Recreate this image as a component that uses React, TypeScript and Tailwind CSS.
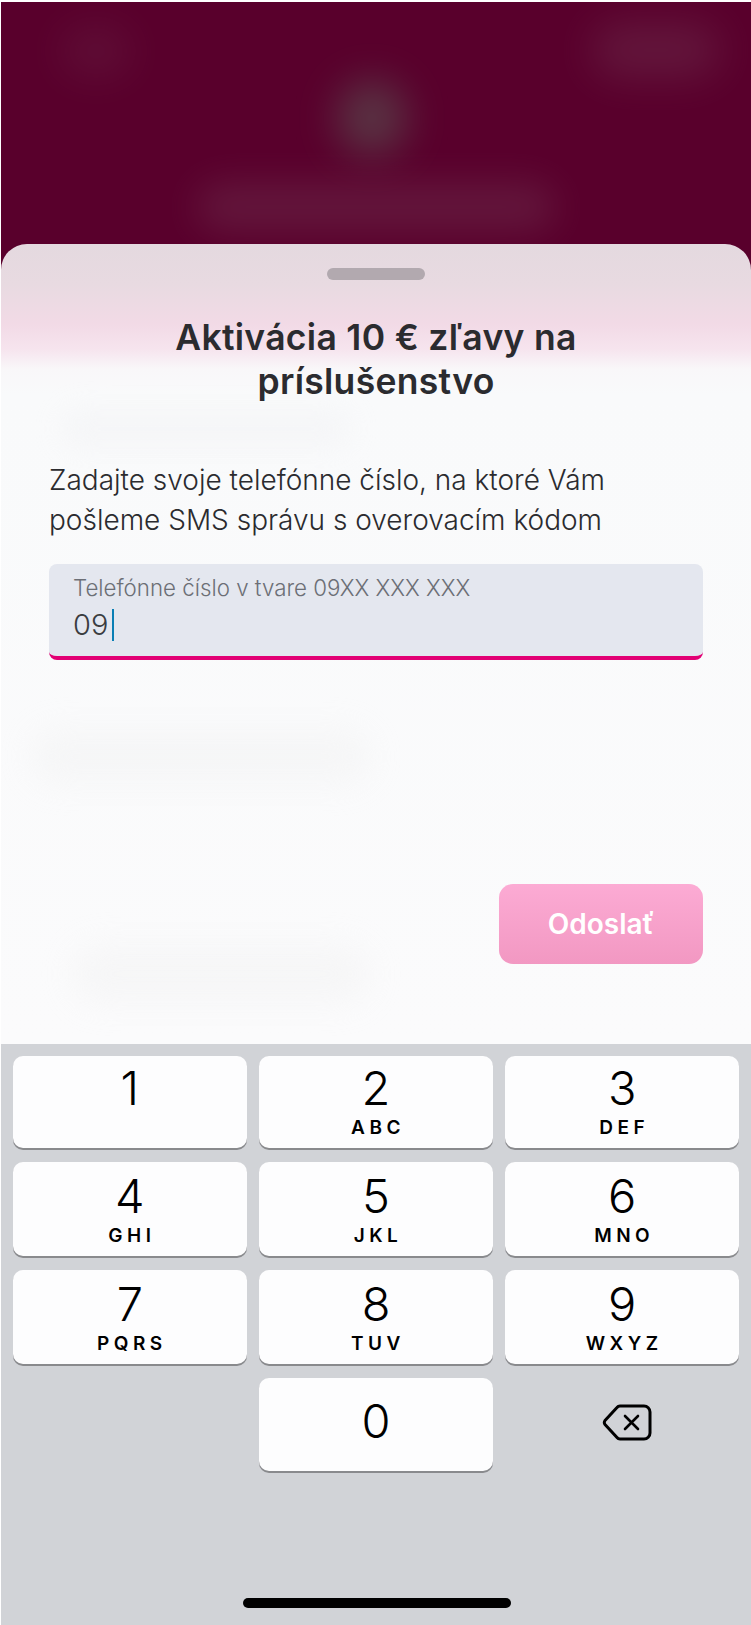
const KEYS = [
  { d: '1', l: '', pad: 'pt-[6px]' },
  { d: '2', l: 'ABC', pad: 'pt-[6px]' },
  { d: '3', l: 'DEF', pad: 'pt-[6px]' },
  { d: '4', l: 'GHI', pad: 'pt-[8px]' },
  { d: '5', l: 'JKL', pad: 'pt-[8px]' },
  { d: '6', l: 'MNO', pad: 'pt-[8px]' },
  { d: '7', l: 'PQRS', pad: 'pt-[8px]' },
  { d: '8', l: 'TUV', pad: 'pt-[8px]' },
  { d: '9', l: 'WXYZ', pad: 'pt-[8px]' },
  { d: '0', l: '', pad: 'pt-[17px]' },
]

function Key({ d, l, pad }: { d: string; l: string; pad: string }) {
  return (
    <div className={`flex h-full flex-col items-center rounded-[10px] bg-[#fdfdfe] text-black shadow-[0_2px_0_#898a8d] ${pad}`}>
      <span className="text-[47px] leading-[52px] font-light">{d}</span>
      {l && <span className="mt-[3px] pl-[4px] text-[19px] leading-[22px] font-semibold tracking-[4.500px]">{l}</span>}
    </div>
  )
}

function Backspace() {
  return (
    <svg width="50" height="37" viewBox="0 0 50 37" fill="none" stroke="#000" strokeWidth="3" strokeLinejoin="round" strokeLinecap="round">
      <path d="M18 2h24a6 6 0 0 1 6 6v21a6 6 0 0 1-6 6H18a4 4 0 0 1-3-1.500L3 20.500a3.500 3.500 0 0 1 0-4L15 3.500A4 4 0 0 1 18 2z" />
      <path d="M23 12l13 13M36 12L23 25" strokeWidth="2.600" />
    </svg>
  )
}

export default function App() {
  return (
    <div className="flex h-[1625px] w-[751px] flex-col overflow-hidden bg-white pt-[2px] pl-px font-['Inter',sans-serif]">
      <div className="relative flex h-[1042px] flex-none flex-col overflow-hidden bg-[#59002c]">
        {/* blurred content behind the sheet */}
        <div className="absolute top-[78px] left-[336px] h-[76px] w-[70px] rounded-full bg-[#5a6058] opacity-55 blur-[20px]" />
        <div className="absolute top-[24px] left-[60px] h-[50px] w-[70px] rounded-full bg-[#7a4a60] opacity-20 blur-[20px]" />
        <div className="absolute top-[20px] left-[590px] h-[56px] w-[130px] rounded-full bg-[#7a4a60] opacity-30 blur-[20px]" />
        <div className="absolute top-[180px] left-[195px] h-[50px] w-[360px] rounded-full bg-[#7a4a60] opacity-30 blur-[18px]" />

        <div className="h-[242px] flex-none" />
        <div className="relative flex flex-1 flex-col overflow-hidden rounded-t-[26px] bg-[linear-gradient(180deg,#e4d9df_0px,#e8dae1_40px,#f2dae6_80px,#f6e4ee_105px,#f9f7f9_125px,#f9fafb_150px,#fbfbfc_100%)]">
          <div className="absolute top-[165px] left-[60px] h-[40px] w-[290px] rounded-full bg-[#ececef] opacity-30 blur-[14px]" />
          <div className="absolute top-[485px] left-[30px] h-[55px] w-[340px] rounded-full bg-[#ececec] opacity-30 blur-[16px]" />
          <div className="absolute top-[700px] left-[70px] h-[60px] w-[300px] rounded-full bg-[#ececec] opacity-30 blur-[16px]" />

          <div className="relative flex flex-col px-[48px]">
            <div className="mx-auto mt-[24px] h-[12px] w-[98px] rounded-full bg-[#b2a9af]" />
            <h1 className="mt-[36px] text-center text-[35.500px] leading-[44px] font-semibold tracking-[0.3px] text-[#2b2b2f]">
              Aktivácia 10 € zľavy na
              <br />
              príslušenstvo
            </h1>
            <p className="mt-[56px] text-[28px] leading-[40px] font-light text-[#2b2b2f]">
              Zadajte svoje telefónne číslo, na ktoré Vám
              <br />
              pošleme SMS správu s overovacím kódom
            </p>
            <div className="mt-[24px] h-[96px] rounded-[8px] border-b-4 border-[#e20074] bg-[#e4e7ef] px-[24px] pt-[10px]">
              <div className="text-[22.300px] leading-[28px] font-light text-[#6c6f76]">Telefónne číslo v tvare 09XX XXX XXX</div>
              <div className="mt-[5px] flex h-[36px] items-center text-[29px] leading-[36px] font-light text-[#3a3c40]">
                09
                <span className="ml-[4px] h-[32px] w-[2px] bg-[#0a7fb5]" />
              </div>
            </div>
            <div className="mt-[224px] flex justify-end">
              <div className="flex h-[80px] w-[204px] items-center justify-center rounded-[14px] bg-[linear-gradient(180deg,#fcabd4,#f298c2)] text-[28px] font-semibold text-white">
                Odoslať
              </div>
            </div>
          </div>
        </div>
      </div>

      <div className="flex flex-1 flex-col bg-[#d1d3d7] px-[12px] pt-[12px]">
        <div className="grid grid-cols-3 grid-rows-[92px_94px_94px_93px] gap-x-[12.500px] gap-y-[14px]">
          {KEYS.slice(0, 9).map((k) => (
            <Key key={k.d} d={k.d} l={k.l} pad={k.pad} />
          ))}
          <div />
          <Key d={KEYS[9].d} l={KEYS[9].l} pad={KEYS[9].pad} />
          <div className="flex items-start justify-center pt-[26px] pl-[10px]">
            <Backspace />
          </div>
        </div>
        <div className="mt-[127px] ml-[230px] h-[10px] w-[268px] rounded-full bg-black" />
      </div>
    </div>
  )
}
